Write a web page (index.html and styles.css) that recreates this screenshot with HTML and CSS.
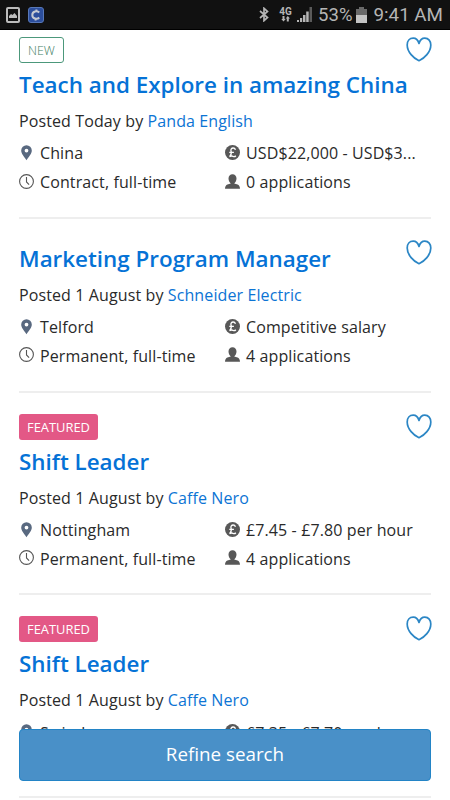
FILE: index.html
```html
<!DOCTYPE html>
<html lang="en">
<head>
  <meta charset="UTF-8" />
  <meta name="viewport" content="width=device-width, initial-scale=1" />
  <title>Job search</title>
  <link rel="stylesheet" href="styles.css">
</head>
<body>

<!-- shared icons -->
<svg class="sprite" width="0" height="0">
  <symbol id="heart" viewBox="0 0 26 25">
    <path d="M13 6.500C12 3 10 1.200 7.200 1.200 3.500 1.200 1.200 4 1.200 8c0 7 6.500 13.500 11.800 15.700C18.300 21.500 24.800 15 24.800 8c0-4-2.300-6.800-6-6.800C16 1.200 14 3 13 6.500z" fill="none" stroke="#2b86c5" stroke-width="1.700" stroke-linejoin="round"/>
  </symbol>
  <symbol id="pin" viewBox="0 0 15 16">
    <path fill-rule="evenodd" d="M7.500.300a5.300 5.300 0 0 0-5.300 5.300c0 3.200 2.700 5.700 5.300 9.700 2.600-4 5.300-6.500 5.300-9.700A5.300 5.300 0 0 0 7.500.300zm0 3.400a1.900 1.900 0 1 1 0 3.800 1.900 1.900 0 0 1 0-3.800z" fill="#596980"/>
  </symbol>
  <symbol id="clock" viewBox="0 0 15 16">
    <circle cx="7.500" cy="7.500" r="6.900" fill="none" stroke="#555" stroke-width="1.100"/>
    <path d="M7.500 3v5l2.600 2.600" fill="none" stroke="#555" stroke-width="1.100"/>
  </symbol>
  <symbol id="pound" viewBox="0 0 15 16">
    <circle cx="7.500" cy="7.500" r="7.500" fill="#585858"/>
    <path d="M10.500 4.700C10 3.500 9 3 8.100 3 6.500 3 5.700 4.300 6 5.700c.5 2 .7 4-1.500 5.800 1.600-.8 2.700-.5 3.600-.1 1 .4 2 .2 2.700-.7M4.300 7.400h4.600" fill="none" stroke="#fff" stroke-width="1.400"/>
  </symbol>
  <symbol id="person" viewBox="0 0 15 16">
    <path d="M7.500.300c2.400 0 4 1.700 4 4.200 0 2.300-1.100 4-2.300 4.900l3.400 1.200c1.300.5 2.400 2 2.400 4.100H0c0-2.100 1.100-3.600 2.400-4.100l3.400-1.200c-1.200-.9-2.300-2.600-2.300-4.900C3.500 2 5.100.300 7.500.300z" fill="#585858"/>
  </symbol>
</svg>

<header class="status-bar">
  <svg class="status-picture" width="14" height="16" viewBox="0 0 14 16">
    <rect x="1" y="1" width="12" height="14" rx="1" fill="none" stroke="#bcbcbc" stroke-width="2"/>
    <path d="M3 11V9l2-2 1.500 1 2-2L11 9v2z" fill="#bcbcbc"/>
  </svg>
  <svg class="status-app" width="16" height="16" viewBox="0 0 16 16">
    <rect x=".5" y=".5" width="15" height="15" rx="2.500" fill="#2c4e9c" stroke="#5878b8"/>
    <path d="M11.200 5.500C9.500 3.500 4.300 3.800 4.300 8s5.200 4.500 6.900 2.500M8.400 2.500v2.500M7.600 11v2.500" fill="none" stroke="#c4c9d2" stroke-width="2"/>
  </svg>
  <svg class="status-bluetooth" width="10" height="15" viewBox="0 0 10 15">
    <path d="M1 4l7.500 6.500L5 13.700V1.300l3.500 3.200L1 11" fill="none" stroke="#b5b5b5" stroke-width="1.700"/>
  </svg>
  <span class="network">
    <span class="network-type">4G</span>
    <svg width="9" height="6" viewBox="0 0 9 6">
      <path d="M1.500 0v3H.300L2.500 5.500 4.700 3H3.500V0zM5.800 5.500v-3H4.700L6.800 0 9 2.500H7.800v3z" fill="#b5b5b5"/>
    </svg>
  </span>
  <svg class="status-signal" width="16" height="15" viewBox="0 0 16 15">
    <path d="M0 13h2v2H0zM3 11h2.200v4H3zM6 8h2.500v7H6zM9.200 4.500h2.500V15H9.200z" fill="#b5b5b5"/>
    <path d="M12.500 0H15v15h-2.500z" fill="#5a5a5a"/>
  </svg>
  <span class="status-percent">53%</span>
  <svg class="status-battery" width="11" height="16" viewBox="0 0 11 16">
    <path d="M3 0h5v2h3v6H0V2h3z" fill="#696969"/>
    <path d="M0 8h11v8H0z" fill="#c4c4c4"/>
  </svg>
  <span class="status-time">9:41 AM</span>
</header>

<main class="results">
  <div class="job-list">
    <article class="job">
      <svg class="save" width="26" height="25"><use href="#heart"/></svg>
      <span class="badge badge-new">NEW</span>
      <h2 class="title">Teach and Explore in amazing China</h2>
      <p class="posted">Posted Today by <a class="company">Panda English</a></p>
      <ul class="details">
        <li><svg class="icon"><use href="#pin"/></svg><span>China</span></li>
        <li><svg class="icon"><use href="#pound"/></svg><span>USD$22,000 - USD$3...</span></li>
        <li><svg class="icon"><use href="#clock"/></svg><span>Contract, full-time</span></li>
        <li><svg class="icon"><use href="#person"/></svg><span>0 applications</span></li>
      </ul>
    </article>

    <article class="job">
      <svg class="save" width="26" height="25"><use href="#heart"/></svg>
      <h2 class="title">Marketing Program Manager</h2>
      <p class="posted">Posted 1 August by <a class="company">Schneider Electric</a></p>
      <ul class="details">
        <li><svg class="icon"><use href="#pin"/></svg><span>Telford</span></li>
        <li><svg class="icon"><use href="#pound"/></svg><span>Competitive salary</span></li>
        <li><svg class="icon"><use href="#clock"/></svg><span>Permanent, full-time</span></li>
        <li><svg class="icon"><use href="#person"/></svg><span>4 applications</span></li>
      </ul>
    </article>

    <article class="job">
      <svg class="save" width="26" height="25"><use href="#heart"/></svg>
      <span class="badge badge-featured">FEATURED</span>
      <h2 class="title">Shift Leader</h2>
      <p class="posted">Posted 1 August by <a class="company">Caffe Nero</a></p>
      <ul class="details">
        <li><svg class="icon"><use href="#pin"/></svg><span>Nottingham</span></li>
        <li><svg class="icon"><use href="#pound"/></svg><span>£7.45 - £7.80 per hour</span></li>
        <li><svg class="icon"><use href="#clock"/></svg><span>Permanent, full-time</span></li>
        <li><svg class="icon"><use href="#person"/></svg><span>4 applications</span></li>
      </ul>
    </article>

    <article class="job">
      <svg class="save" width="26" height="25"><use href="#heart"/></svg>
      <span class="badge badge-featured">FEATURED</span>
      <h2 class="title">Shift Leader</h2>
      <p class="posted">Posted 1 August by <a class="company">Caffe Nero</a></p>
      <ul class="details">
        <li><svg class="icon"><use href="#pin"/></svg><span>Swindon</span></li>
        <li><svg class="icon"><use href="#pound"/></svg><span>£7.35 - £7.70 per hour</span></li>
      </ul>
    </article>
  </div>
</main>

<button type="button" class="refine">Refine search</button>

</body>
</html>
```

FILE: styles.css
```css
* {
  box-sizing: border-box;
}
body {
  margin: 0;
  height: 800px;
  overflow: hidden;
  background: #fff;
  color: #2a2a2a;
  font-family: "Open Sans", sans-serif;
  font-size: 16px;
  letter-spacing: 0.11px;
}
.sprite {
  position: absolute;
}

/* phone status bar */
.status-bar {
  display: flex;
  align-items: center;
  height: 30px;
  padding: 0 7px 0 6px;
  background: #111;
  border-bottom: 1px solid #000;
  color: #b5b5b5;
  font-family: Roboto, sans-serif;
  letter-spacing: 0;
}
.status-app {
  margin-left: 8px;
}
.status-bluetooth {
  margin-left: auto;
}
.network {
  display: flex;
  flex-direction: column;
  align-items: center;
  width: 13px;
  margin-left: 10px;
}
.network-type {
  font-size: 10px;
  font-weight: bold;
  line-height: 9px;
}
.status-signal {
  margin-left: 5px;
}
.status-percent {
  margin-left: 5px;
  font-size: 18.5px;
}
.status-battery {
  margin-left: 4px;
}
.status-time {
  margin-left: 6px;
  font-size: 18.8px;
}
.status-percent,
.status-time {
  padding-top: 1px;
}

/* job list, scrolled a little under the status bar */
.results {
  height: 770px;
  overflow: hidden;
}
.job-list {
  margin: -14px 19px 0;
}
.job {
  position: relative;
  height: 202.7px;
  padding-top: 21px;
  border-bottom: 2px solid #eee;
}
.job:nth-child(2) {
  height: 174px;
}
.save {
  position: absolute;
  top: 21px;
  right: -1px;
}
.badge {
  display: block;
  width: fit-content;
  height: 26px;
  margin-bottom: 3px;
  padding: 0 8px;
  border-radius: 3px;
  font-size: 12.9px;
  letter-spacing: 0;
  line-height: 26px;
}
.badge-new {
  padding: 0 8px;
  border: 1px solid #4c987b;
  color: #3f8064;
  font-size: 12.4px;
  font-weight: 300;
  line-height: 25px;
}
.badge-featured {
  background: #e35886;
  color: #fff;
}
.title {
  margin: 0;
  color: #0572d6;
  font-size: 22.4px;
  font-weight: 600;
  letter-spacing: 0;
  line-height: 37px;
}
.posted {
  margin: 3px 0 3px;
  line-height: 30px;
}
.company {
  color: #0c74d4;
}
.details {
  display: grid;
  grid-template-columns: 206px 1fr;
  margin: 0;
  padding: 0;
  list-style: none;
}
.details li {
  display: flex;
  align-items: center;
  height: 28.8px;
  white-space: nowrap;
}
.icon {
  width: 15px;
  height: 16px;
  margin: 0 6px 1px 0;
}

.refine {
  position: fixed;
  left: 19px;
  right: 19px;
  bottom: 19px;
  height: 52px;
  padding: 0 0 2px;
  background: #4990c8;
  border: 1px solid #2384c6;
  border-radius: 4px;
  color: #fff;
  font-family: inherit;
  font-size: 18.8px;
}
```
